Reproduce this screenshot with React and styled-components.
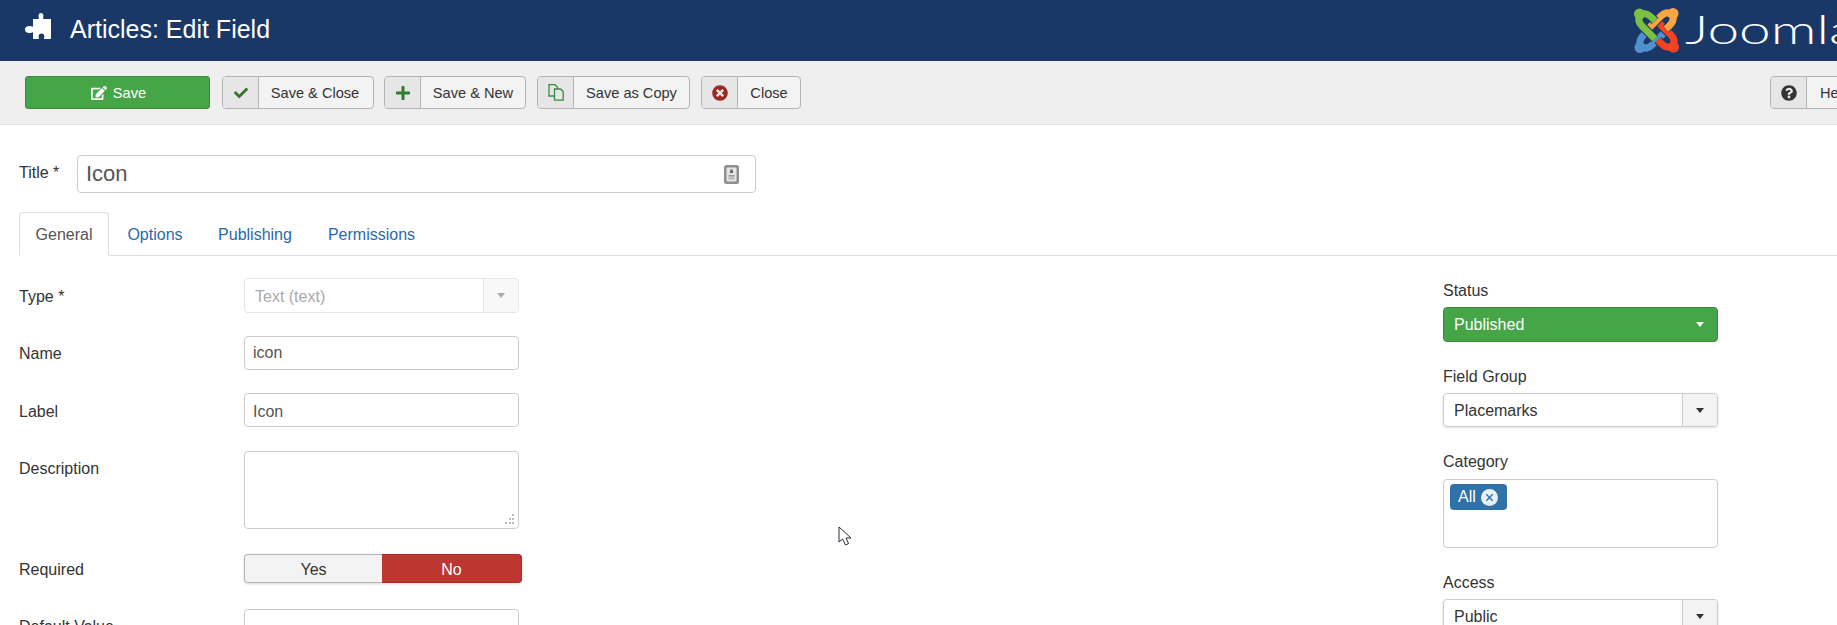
import React from 'react';
import styled, { createGlobalStyle } from 'styled-components';
import { FaCheck, FaPlus, FaTimesCircle, FaQuestionCircle, FaEdit } from 'react-icons/fa';

const Global = createGlobalStyle`
  html, body { margin: 0; padding: 0; background: #fff; overflow: hidden; }
  * { box-sizing: border-box; }
  body { font-family: "Liberation Sans", Arial, sans-serif; font-size: 16px; color: #333; }
`;

const Page = styled.div`
  position: relative;
  width: 1889px;
  height: 625px;
  overflow: hidden;
`;

const Header = styled.header`
  height: 61px;
  background: #1a3867;
  display: flex;
  align-items: center;
  padding-left: 25px;
`;

const PageTitle = styled.h1`
  margin: 0 0 2px 19px;
  font-size: 25px;
  font-weight: 400;
  color: #fff;
`;

const PuzzleMark = styled.svg`
  flex-shrink: 0;
  margin-bottom: 9px;
`;

const Brand = styled.div`
  margin-left: auto;
  display: flex;
  align-items: center;
  gap: 6px;
  width: 255px;
  flex-shrink: 0;
`;

const BrandName = styled.span`
  display: inline-block;
  font-family: Lato, "Open Sans", sans-serif;
  font-weight: 300;
  font-size: 40px;
  line-height: 1;
  color: #fff;
  transform: scaleX(1.42);
  transform-origin: left center;
  position: relative;
  top: -2px;
`;

const Toolbar = styled.div`
  height: 64px;
  background: #efefef;
  border-bottom: 1px solid #e2e2e2;
  display: flex;
  align-items: center;
  gap: 11px;
  padding: 0 25px;
`;

const SaveButton = styled.button`
  width: 185px;
  height: 33px;
  margin-right: 1px;
  border: 1px solid #3a8a3a;
  border-radius: 3px;
  background: #46a546;
  color: #fff;
  font: 14.6px "Liberation Sans", Arial, sans-serif;
  display: flex;
  align-items: center;
  justify-content: center;
  gap: 6px;
  padding: 0 0 0 2px;
  svg { width: 16px; height: 16px; }
`;

const ToolButton = styled.button`
  height: 33px;
  width: ${p => p.$width}px;
  margin-left: ${p => p.$push || 0}px;
  flex-shrink: 0;
  border: 1px solid #b3b3b3;
  border-radius: 4px;
  background: #f3f3f3;
  color: #333;
  font: 14.6px "Liberation Sans", Arial, sans-serif;
  display: flex;
  align-items: stretch;
  padding: 0;
  overflow: hidden;
`;

const ToolIcon = styled.span`
  width: 36px;
  flex-shrink: 0;
  background: #e6e6e6;
  border-right: 1px solid #b3b3b3;
  display: flex;
  align-items: center;
  justify-content: center;
  color: ${p => p.$color};
`;

const ToolText = styled.span`
  flex: 1;
  display: flex;
  align-items: center;
  justify-content: center;
  white-space: nowrap;
  padding-right: ${p => p.$trim || 0}px;
`;

const Main = styled.main`
  padding: 30px 0 0 19px;
`;

const TitleRow = styled.div`
  display: flex;
  align-items: center;
  height: 38px;
`;

const TitleLabel = styled.label`
  width: 58px;
  flex-shrink: 0;
  position: relative;
  top: -1px;
`;

const TitleBox = styled.div`
  width: 679px;
  height: 38px;
  border: 1px solid #ccc;
  border-radius: 4px;
  display: flex;
  align-items: center;
  justify-content: space-between;
  padding: 0 16px 0 8px;
  font-size: 22px;
  color: #555;
`;

const Tabs = styled.nav`
  margin: 19px 0 0 0;
  height: 44px;
  border-bottom: 1px solid #ddd;
  display: flex;
  align-items: stretch;
`;

const Tab = styled.a`
  height: 44px;
  padding: 2px 0 0;
  width: ${p => p.$width}px;
  display: flex;
  align-items: center;
  justify-content: center;
  white-space: nowrap;
  border: 1px solid ${p => (p.$active ? '#ddd' : 'transparent')};
  border-bottom: 1px solid ${p => (p.$active ? '#fff' : 'transparent')};
  border-radius: 4px 4px 0 0;
  background: ${p => (p.$active ? '#fff' : 'transparent')};
  color: ${p => (p.$active ? '#555' : '#2a69a8')};
`;

const Columns = styled.div`
  display: flex;
  justify-content: space-between;
  width: 1699px;
  padding-top: 22px;
`;

const LeftColumn = styled.div`
  width: 504px;
`;

const Row = styled.div`
  display: flex;
  align-items: flex-start;
  margin-bottom: ${p => p.$gap ?? 23}px;
`;

const RowLabel = styled.label`
  width: 225px;
  flex-shrink: 0;
  height: ${p => p.$line || 34}px;
  padding-top: ${p => p.$nudge || 1}px;
  line-height: ${p => p.$line || 34}px;
`;

const TextField = styled.input`
  width: 275px;
  height: 34px;
  border: 1px solid #ccc;
  border-radius: 4px;
  padding: ${p => p.$nudge || 0}px 8px 0;
  font: 16px "Liberation Sans", Arial, sans-serif;
  color: #555;
  background: #fff;
  outline: none;
`;

const TextArea = styled.div`
  position: relative;
  width: 275px;
  height: 78px;
  border: 1px solid #ccc;
  border-radius: 4px;
  background: #fff;
`;

const Grip = styled.svg`
  position: absolute;
  right: 3px;
  bottom: 3px;
  width: 11px;
  height: 11px;
`;

const SelectBox = styled.div`
  width: 275px;
  height: ${p => p.$height || 34}px;
  display: flex;
  align-items: stretch;
  border-radius: 4px;
  border: 1px solid ${p => p.$border};
  background: ${p => p.$bg};
  color: ${p => p.$color};
  overflow: hidden;
  box-shadow: ${p => (p.$shadow ? '0 1px 3px rgba(0,0,0,.12)' : 'none')};
`;

const SelectText = styled.span`
  flex: 1;
  display: flex;
  align-items: center;
  padding-left: 10px;
  padding-top: ${p => p.$nudge || 0}px;
`;

const SelectToggle = styled.span`
  width: 35px;
  display: flex;
  align-items: center;
  justify-content: center;
  background: ${p => p.$bg || 'transparent'};
  border-left: ${p => (p.$line ? `1px solid ${p.$line}` : 'none')};
`;

const Caret = styled.i`
  width: 0;
  height: 0;
  border-left: 4.5px solid transparent;
  border-right: 4.5px solid transparent;
  border-top: 5px solid ${p => p.$color};
`;

const Switch = styled.div`
  width: 278px;
  height: 29px;
  display: flex;
  box-shadow: 0 1px 3px rgba(0, 0, 0, .15);
  border-radius: 4px;
`;

const SwitchOption = styled.span`
  display: flex;
  align-items: center;
  justify-content: center;
  padding-top: 2px;
  width: ${p => p.$width}px;
  background: ${p => (p.$on ? '#bd362f' : '#f3f3f3')};
  color: ${p => (p.$on ? '#fff' : '#333')};
  border: 1px solid ${p => (p.$on ? '#a52e28' : '#b3b3b3')};
  border-width: ${p => (p.$on ? '1px 1px 1px 0' : '1px 0 1px 1px')};
  border-radius: ${p => (p.$on ? '0 4px 4px 0' : '4px 0 0 4px')};
`;

const RightColumn = styled.aside`
  width: 275px;
  padding-top: 2px;
`;

const Group = styled.div`
  margin-bottom: 24px;
`;

const GroupLabel = styled.label`
  display: block;
  line-height: 22px;
  margin-bottom: ${p => p.$gap || 5}px;
`;

const TagBox = styled.div`
  width: 275px;
  height: 69px;
  border: 1px solid #ccc;
  border-radius: 4px;
  padding: 4px 6px;
  background: #fff;
`;

const Tag = styled.span`
  width: 57px;
  height: 26px;
  display: flex;
  align-items: center;
  gap: 5px;
  padding-left: 8px;
  border-radius: 4px;
  background: #3071a9;
  color: #fff;
`;

const Pointer = styled.svg`
  position: absolute;
  left: 838px;
  top: 526px;
  width: 14px;
  height: 20px;
`;

const arm = 'M21 13 C16 7 11 4 7 7 C3 11 5 15 8 18 L21 31';
const Arm = ({ angle, color }) => (
  <g transform={`rotate(${angle} 22.5 22.5)`}>
    <path d={arm} fill="none" stroke="#1a3867" strokeWidth="9" />
    <path d={arm} fill="none" stroke={color} strokeWidth="7" />
    <circle cx="5.5" cy="6" r="5.5" fill={color} />
  </g>
);

const JoomlaMark = () => (
  <svg width="45" height="45" viewBox="0 0 45 45" style={{ flexShrink: 0 }}>
    <Arm angle={270} color="#5091cd" />
    <Arm angle={180} color="#f44321" />
    <Arm angle={90} color="#f9a541" />
    <Arm angle={0} color="#7ac143" />
  </svg>
);

const Puzzle = () => (
  <PuzzleMark width="26" height="26" viewBox="0 0 26 26">
    <path
      fill="#fff"
      d="M8 6 H13 C14 6 14.5 5.5 14 4.8 C13 3.6 13.4 0 16 0 C18.6 0 19 3.6 18 4.8 C17.5 5.5 18 6 19 6 H26 V25 C26 25.6 25.6 26 25 26 H19.5 C19 26 18.8 25.6 19 25 C20 23.5 19.2 20.5 16.5 20.5 C13.8 20.5 13 23.5 14 25 C14.2 25.6 14 26 13.5 26 H9 C8.4 26 8 25.6 8 25 V20 C8 19.2 7.4 19 6.8 19.4 C5.5 20.4 0 20.5 0 16.5 C0 12.5 5.5 12.6 6.8 13.6 C7.4 14 8 13.8 8 13 Z"
    />
  </PuzzleMark>
);

const CopyIcon = () => (
  <svg width="16" height="17" viewBox="0 0 16 17" fill="none" stroke="#3c8a3c" strokeWidth="1.3">
    <path d="M1 .7 H7 L9.5 3.2 V12 H1 Z" fill="#e6e6e6" />
    <path d="M6.5 5 H12.5 L15.2 7.6 V16.2 H6.5 Z" fill="#e6e6e6" />
  </svg>
);

const KeyBadge = () => (
  <svg width="15" height="19" viewBox="0 0 15 19">
    <rect x="0" y="0" width="15" height="19" rx="2.5" fill="#8f8f8f" />
    <rect x="2.5" y="2.5" width="10" height="14" rx="1" fill="#e4e4e4" />
    <path d="M6.4 4.5 h2.2 l.6 3.5 h-3.4 Z" fill="#666" />
    <rect x="4.5" y="10" width="6" height="1.6" fill="#999" />
    <rect x="4.5" y="12.6" width="6" height="1.6" fill="#aaa" />
  </svg>
);

const TagClose = () => (
  <svg width="17" height="17" viewBox="0 0 17 17">
    <circle cx="8.5" cy="8.5" r="8.5" fill="#e8eff6" />
    <path d="M5.3 5.3 L11.7 11.7 M11.7 5.3 L5.3 11.7" stroke="#3071a9" strokeWidth="1.4" />
  </svg>
);

export default function App() {
  return (
    <Page>
      <Global />
      <Header>
        <Puzzle />
        <PageTitle>Articles: Edit Field</PageTitle>
        <Brand>
          <JoomlaMark />
          <BrandName>Joomla</BrandName>
        </Brand>
      </Header>
      <Toolbar>
        <SaveButton><FaEdit />Save</SaveButton>
        <ToolButton $width={152}>
          <ToolIcon $color="#37752f"><FaCheck size={14} /></ToolIcon>
          <ToolText $trim={2}>Save &amp; Close</ToolText>
        </ToolButton>
        <ToolButton $width={142} $push={-1}>
          <ToolIcon $color="#2f7d32"><FaPlus size={16} /></ToolIcon>
          <ToolText>Save &amp; New</ToolText>
        </ToolButton>
        <ToolButton $width={153}>
          <ToolIcon><CopyIcon /></ToolIcon>
          <ToolText>Save as Copy</ToolText>
        </ToolButton>
        <ToolButton $width={100}>
          <ToolIcon $color="#972b23"><FaTimesCircle size={16} /></ToolIcon>
          <ToolText>Close</ToolText>
        </ToolButton>
        <ToolButton $width={94} $push={958}>
          <ToolIcon $color="#333"><FaQuestionCircle size={16} /></ToolIcon>
          <ToolText>Help</ToolText>
        </ToolButton>
      </Toolbar>
      <Main>
        <TitleRow>
          <TitleLabel>Title *</TitleLabel>
          <TitleBox>Icon<KeyBadge /></TitleBox>
        </TitleRow>
        <Tabs>
          <Tab $active $width={90}>General</Tab>
          <Tab $width={92}>Options</Tab>
          <Tab $width={108}>Publishing</Tab>
          <Tab $width={125}>Permissions</Tab>
        </Tabs>
        <Columns>
          <LeftColumn>
            <Row>
              <RowLabel $line={35}>Type *</RowLabel>
              <SelectBox $height={35} $border="#e6e6e6" $bg="#fff" $color="#aaa">
                <SelectText $nudge={2}>Text (text)</SelectText>
                <SelectToggle $bg="#f8f8f8" $line="#e6e6e6"><Caret $color="#aaa" /></SelectToggle>
              </SelectBox>
            </Row>
            <Row>
              <RowLabel>Name</RowLabel>
              <TextField readOnly value="icon" />
            </Row>
            <Row $gap={24}>
              <RowLabel $nudge={2}>Label</RowLabel>
              <TextField readOnly value="Icon" $nudge={4} />
            </Row>
            <Row $gap={25}>
              <RowLabel>Description</RowLabel>
              <TextArea>
                <Grip viewBox="0 0 11 11" fill="#bbb">
                  <rect x="8" y="0" width="2" height="2" />
                  <rect x="5" y="4" width="2" height="2" />
                  <rect x="8" y="4" width="2" height="2" />
                  <rect x="1" y="8" width="2" height="2" />
                  <rect x="5" y="8" width="2" height="2" />
                  <rect x="8" y="8" width="2" height="2" />
                </Grip>
              </TextArea>
            </Row>
            <Row $gap={26}>
              <RowLabel $line={29}>Required</RowLabel>
              <Switch>
                <SwitchOption $width={138}>Yes</SwitchOption>
                <SwitchOption $on $width={140}>No</SwitchOption>
              </Switch>
            </Row>
            <Row>
              <RowLabel>Default Value</RowLabel>
              <TextField readOnly value="" />
            </Row>
          </LeftColumn>
          <RightColumn>
            <Group>
              <GroupLabel>Status</GroupLabel>
              <SelectBox $height={35} $border="#3a8a3a" $bg="#46a546" $color="#fff">
                <SelectText>Published</SelectText>
                <SelectToggle><Caret $color="#fff" /></SelectToggle>
              </SelectBox>
            </Group>
            <Group>
              <GroupLabel>Field Group</GroupLabel>
              <SelectBox $shadow $border="#ccc" $bg="#fff" $color="#333">
                <SelectText $nudge={2}>Placemarks</SelectText>
                <SelectToggle $bg="#f3f3f3" $line="#ccc"><Caret $color="#333" /></SelectToggle>
              </SelectBox>
            </Group>
            <Group>
              <GroupLabel $gap={6}>Category</GroupLabel>
              <TagBox>
                <Tag>All<TagClose /></Tag>
              </TagBox>
            </Group>
            <Group>
              <GroupLabel>Access</GroupLabel>
              <SelectBox $shadow $border="#ccc" $bg="#fff" $color="#333">
                <SelectText $nudge={2}>Public</SelectText>
                <SelectToggle $bg="#f3f3f3" $line="#ccc"><Caret $color="#333" /></SelectToggle>
              </SelectBox>
            </Group>
          </RightColumn>
        </Columns>
      </Main>
      <Pointer viewBox="0 0 14 20">
        <path d="M1 1 L1 16 L4.5 13 L7.5 19 L10.5 17.5 L8 12 L13 12 Z" fill="#fff" stroke="#2b2b3a" strokeWidth="1" />
      </Pointer>
    </Page>
  );
}
